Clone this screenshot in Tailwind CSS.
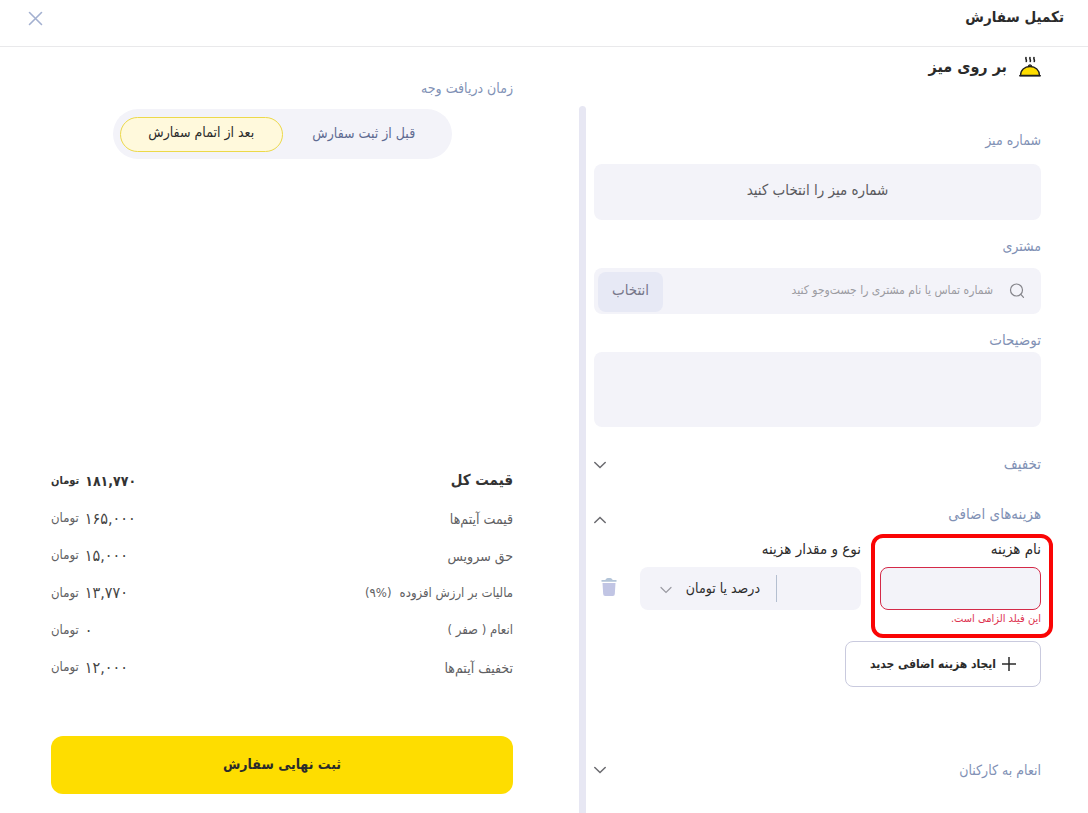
<!DOCTYPE html>
<html lang="fa" dir="rtl">
<head>
    <meta charset="UTF-8">
    <meta name="viewport" content="width=device-width, initial-scale=1.0">
    <title>تکمیل سفارش</title>
    <script src="https://cdn.jsdelivr.net/npm/@tailwindcss/browser@4"></script>
</head>
<body class="font-['DejaVu_Sans_Condensed','DejaVu_Sans',sans-serif] flex flex-col h-screen overflow-hidden bg-white text-[#2b2b2b] text-sm">
    <header class="flex items-center justify-between shrink-0 h-[47px] pb-2.5 pr-6 pl-7 border-b border-[#e9e9eb]">
        <h1 class="text-[15px] font-bold">تکمیل سفارش</h1>
        <button type="button" aria-label="بستن" class="text-[#a3b0d0]">
            <svg class="w-4 h-4" viewBox="0 0 16 16" fill="none" stroke="currentColor" stroke-width="1.6" stroke-linecap="round"><path d="M1.500 2.500l12 12M13.500 2.500l-12 12"/></svg>
        </button>
    </header>

    <main class="grid grid-cols-[509fr_579fr] flex-1 min-h-0">
        <!-- Order form -->
        <section class="min-w-0 min-h-0 flex flex-col">
            <div class="flex items-center gap-3 h-10 mb-[19px] pr-[47px] shrink-0">
                <svg class="w-[22px] h-[22px]" viewBox="0 0 22 22" fill="none" stroke="#1f1f1f" stroke-linecap="round">
                    <path d="M7 1.500c-.8 1 1 2.500.3 4M11 1.500c-.8 1 1 2.500.3 4M15 1.500c-.8 1 1 2.500.3 4" stroke-width="1.600"/>
                    <path d="M9.300 10.800c0-2.600 3.400-2.600 3.400 0" fill="#8a8a80" stroke-width="1.100"/>
                    <path d="M1.500 19.500c0-5.500 4-9 9.500-9s9.500 3.500 9.500 9z" fill="#fedd00" stroke-width="1.300"/>
                    <path d="M.7 19.800h20.600" stroke-width="1.400"/>
                </svg>
                <h2 class="text-base font-bold">بر روی میز</h2>
            </div>

            <div class="flex flex-1 min-h-0">
                <form class="flex-1 min-w-0 overflow-hidden pt-6 pr-[47px] pl-2">
                    <label for="table-number" class="block h-5 leading-5 text-[#8191b5]">شماره میز</label>
                    <button type="button" id="table-number" class="block w-full h-14 mt-[14px] pb-0.5 rounded-lg bg-[#f3f3f9] text-[15px] text-[#5a5a5e]">شماره میز را انتخاب کنید</button>

                    <label for="customer" class="block h-5 leading-5 mt-4 text-[#8191b5]">مشتری</label>
                    <div class="flex items-center h-[46px] mt-3 pr-4 pl-1 rounded-lg bg-[#f3f3f9]">
                        <svg class="w-4 h-4 shrink-0 text-[#85858b]" viewBox="0 0 16 16" fill="none" stroke="currentColor" stroke-width="1.200" stroke-linecap="round"><circle cx="7.500" cy="7" r="6"/><path d="M11.800 11.300l2.700 3"/></svg>
                        <input type="text" id="customer" class="flex-1 min-w-0 h-10 pr-4 pb-0.5 text-xs placeholder-[#9b9ba1] focus:outline-none" placeholder="شماره تماس یا نام مشتری را جست‌وجو کنید">
                        <button type="button" class="w-[65px] h-10 pb-0.5 mt-0.5 rounded-lg bg-[#e7e9f5] text-[15px] text-[#77778a]">انتخاب</button>
                    </div>

                    <label for="notes" class="block h-5 leading-5 mt-4 text-[15px] text-[#8191b5]">توضیحات</label>
                    <textarea id="notes" class="block w-full h-[75px] mt-0.5 rounded-lg bg-[#f3f3f9] resize-none focus:outline-none"></textarea>

                    <button type="button" class="flex items-center justify-between w-full h-5 mt-7 text-[15px] text-[#8191b5]">
                        تخفیف
                        <svg class="w-3 h-3 text-[#6b6b70]" viewBox="0 0 12 12" fill="none" stroke="currentColor" stroke-width="1.500" stroke-linecap="round"><path d="M.8 3.500l5.200 5 5.200-5"/></svg>
                    </button>

                    <button type="button" class="flex items-center justify-between w-full h-5 mt-[30px] text-[15px] text-[#8191b5]">
                        هزینه‌های اضافی
                        <svg class="w-3 h-3 mt-2.5 text-[#6b6b70]" viewBox="0 0 12 12" fill="none" stroke="currentColor" stroke-width="1.500" stroke-linecap="round"><path d="M.8 8.500l5.200-5 5.200 5"/></svg>
                    </button>

                    <div class="flex items-start mt-[14px]">
                        <div class="relative flex-[161] min-w-0">
                            <label for="cost-name" class="block h-5 leading-5 text-[15px]">نام هزینه</label>
                            <input type="text" id="cost-name" class="block w-full h-[43px] mt-2 px-3 rounded-lg border border-[#d42a48] bg-[#f3f3f9] focus:outline-none">
                            <p class="h-4 leading-4 mt-px text-[11px] text-[#dd3350]">این فیلد الزامی است.</p>
                            <div class="absolute -top-[5px] -bottom-[11px] -right-3 -left-[9px] rounded-xl border-4 border-[#fa0505] pointer-events-none"></div>
                        </div>
                        <div class="flex-[221] min-w-0 mr-[19px]">
                            <label for="cost-amount" class="block h-5 leading-5 text-[15px]">نوع و مقدار هزینه</label>
                            <div class="flex items-center h-[43px] mt-2 rounded-lg bg-[#f3f3f9]">
                                <input type="text" id="cost-amount" class="w-[84px] h-full px-3 focus:outline-none">
                                <span class="w-px h-[27px] bg-[#b4bfd0]"></span>
                                <div class="relative flex-1 min-w-0">
                                    <select aria-label="نوع هزینه" class="appearance-none w-full pr-4 pl-8 pb-0.5 text-sm focus:outline-none">
                                        <option>درصد یا تومان</option>
                                    </select>
                                    <svg class="absolute left-5 top-1.5 w-3 h-3 text-[#9a9aa2] pointer-events-none" viewBox="0 0 12 12" fill="none" stroke="currentColor" stroke-width="1.200" stroke-linecap="round"><path d="M1 3.500l5 5 5-5"/></svg>
                                </div>
                            </div>
                        </div>
                        <button type="button" aria-label="حذف" class="w-[46px] h-[43px] mt-7 pb-1 flex items-center justify-center shrink-0 pr-4">
                            <svg class="w-4 h-[18px] shrink-0 mt-px" viewBox="0 0 16 18"><path d="M4.500 2c0-2.600 7-2.600 7 0h4v1.800H.5V2z" fill="#b3c4d8"/><path d="M1.500 5h13l-.7 11a2 2 0 0 1-2 2H4.200a2 2 0 0 1-2-2z" fill="#c1c5e4"/></svg>
                        </button>
                    </div>

                    <button type="button" class="flex items-center justify-center gap-1.5 w-[196px] h-[46px] mt-3.5 rounded-lg border border-[#c9cade] text-xs font-bold">
                        <svg class="w-[14px] h-[14px]" viewBox="0 0 14 14" fill="none" stroke="currentColor" stroke-width="1.500"><path d="M7 0v14M0 7h14"/></svg>
                        ایجاد هزینه اضافی جدید
                    </button>

                    <button type="button" class="flex items-center justify-between w-full h-5 mt-[73px] text-[#8191b5]">
                        انعام به کارکنان
                        <svg class="w-3 h-3 text-[#6b6b70]" viewBox="0 0 12 12" fill="none" stroke="currentColor" stroke-width="1.500" stroke-linecap="round"><path d="M.8 3.500l5.200 5 5.200-5"/></svg>
                    </button>
                </form>
                <div class="w-[7px] rounded-t-full bg-[#e7e7f3]"></div>
            </div>
        </section>

        <!-- Payment summary -->
        <section class="min-w-0 min-h-0 flex flex-col pt-[31px] pb-[19px] pr-[66px] pl-[51px]">
            <fieldset>
                <legend class="h-5 leading-5 text-[#8191b5]">زمان دریافت وجه</legend>
                <div class="flex items-center w-[339px] h-[50px] mx-auto mt-[11px] p-[7px] rounded-full bg-[#f3f3f9]">
                    <label class="flex-1 h-[35px] leading-8 text-center text-[#5f6b92] cursor-pointer">
                        <input type="radio" name="pay-time" class="sr-only">قبل از ثبت سفارش
                    </label>
                    <label class="flex-1 h-[35px] leading-7 text-center rounded-full border border-[#ecd94a] bg-[#fff9dc] cursor-pointer">
                        <input type="radio" name="pay-time" class="sr-only" checked>بعد از اتمام سفارش
                    </label>
                </div>
            </fieldset>

            <dl class="mt-auto text-[13px] text-[#5f5f63]">
                <div class="flex items-center justify-between h-[38px] font-bold text-[#333333]">
                    <dt class="text-[15px]">قیمت کل</dt>
                    <dd class="flex items-center gap-1.5 text-[11px]"><span class="text-sm">۱۸۱,۷۷۰</span>تومان</dd>
                </div>
                <div class="flex items-center justify-between h-[37px]">
                    <dt class="text-sm">قیمت آیتم‌ها</dt>
                    <dd class="flex items-center gap-1.5"><span class="text-base text-[#444444]">۱۶۵,۰۰۰</span>تومان</dd>
                </div>
                <div class="flex items-center justify-between h-[37px]">
                    <dt class="text-sm">حق سرویس</dt>
                    <dd class="flex items-center gap-1.5"><span class="text-base text-[#444444]">۱۵,۰۰۰</span>تومان</dd>
                </div>
                <div class="flex items-center justify-between h-[38px]">
                    <dt class="flex gap-2">مالیات بر ارزش افزوده <span dir="ltr">(۹%)</span></dt>
                    <dd class="flex items-center gap-1.5"><span class="text-base text-[#444444]">۱۳,۷۷۰</span>تومان</dd>
                </div>
                <div class="flex items-center justify-between h-[37px]">
                    <dt>انعام ( صفر )</dt>
                    <dd class="flex items-center gap-1.5"><span class="text-base text-[#444444]">۰</span>تومان</dd>
                </div>
                <div class="flex items-center justify-between h-[37px]">
                    <dt class="text-sm">تخفیف آیتم‌ها</dt>
                    <dd class="flex items-center gap-1.5"><span class="text-base text-[#444444]">۱۲,۰۰۰</span>تومان</dd>
                </div>
            </dl>

            <button type="submit" class="w-full h-[58px] mt-[50px] pb-0.5 rounded-xl bg-[#fedd00] text-sm font-bold shrink-0">ثبت نهایی سفارش</button>
        </section>
    </main>
</body>
</html>
